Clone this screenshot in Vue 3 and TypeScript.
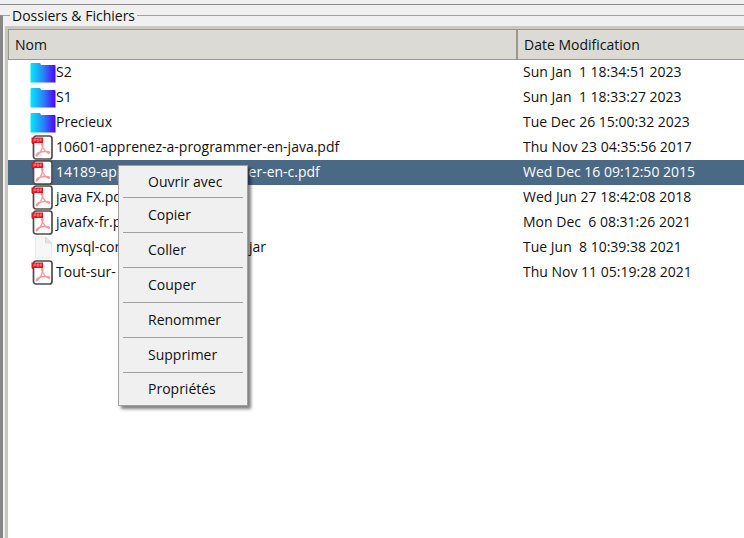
<script setup lang="ts">
import { ref } from 'vue'

type Kind = 'folder' | 'pdf' | 'file'
interface Entry {
  name: string
  kind: Kind
  date: string
}

const entries: Entry[] = [
  { name: 'S2', kind: 'folder', date: 'Sun Jan  1 18:34:51 2023' },
  { name: 'S1', kind: 'folder', date: 'Sun Jan  1 18:33:27 2023' },
  { name: 'Precieux', kind: 'folder', date: 'Tue Dec 26 15:00:32 2023' },
  { name: '10601-apprenez-a-programmer-en-java.pdf', kind: 'pdf', date: 'Thu Nov 23 04:35:56 2017' },
  { name: '14189-apprenez-a-programmer-en-c.pdf', kind: 'pdf', date: 'Wed Dec 16 09:12:50 2015' },
  { name: 'java FX.pdf', kind: 'pdf', date: 'Wed Jun 27 18:42:08 2018' },
  { name: 'javafx-fr.pdf', kind: 'pdf', date: 'Mon Dec  6 08:31:26 2021' },
  { name: 'mysql-connector-java-8.0-bin.jar', kind: 'file', date: 'Tue Jun  8 10:39:38 2021' },
  { name: 'Tout-sur- java.pdf', kind: 'pdf', date: 'Thu Nov 11 05:19:28 2021' },
]

const actions: string[] = ['Ouvrir avec', 'Copier', 'Coller', 'Couper', 'Renommer', 'Supprimer', 'Propriétés']

const selected = ref(4)
const menuOpen = ref(true)

function select(index: number): void {
  selected.value = index
  menuOpen.value = false
}

function openMenu(index: number): void {
  selected.value = index
  menuOpen.value = true
}
</script>

<template>
  <main class="window">
    <fieldset class="group">
      <legend>Dossiers &amp; Fichiers</legend>
      <div class="list">
        <table>
          <colgroup>
            <col class="name-col" />
            <col />
          </colgroup>
          <thead>
            <tr>
              <th scope="col">Nom</th>
              <th scope="col">Date Modification</th>
            </tr>
          </thead>
          <tbody>
            <tr
              v-for="(entry, i) in entries"
              :key="entry.name"
              :class="{ selected: i === selected }"
              @click="select(i)"
              @contextmenu.prevent="openMenu(i)"
            >
              <td>
                <div class="name">
                  <svg v-if="entry.kind === 'folder'" class="icon" viewBox="0 0 26 25" aria-hidden="true">
                    <defs>
                      <linearGradient :id="'folder' + i" x1="0" x2="1" y1="0" y2="0">
                        <stop offset="0" stop-color="#00eaff" />
                        <stop offset="0.5" stop-color="#2a86f8" />
                        <stop offset="1" stop-color="#5000ff" />
                      </linearGradient>
                    </defs>
                    <path d="M0.500 22.500V4Q0.500 3 1.500 3H9.500Q10.500 3 11 5H24.500Q25.500 5 25.500 6V22.500Z" :fill="'url(#folder' + i + ')'" />
                  </svg>
                  <svg v-else-if="entry.kind === 'pdf'" class="icon" viewBox="0 0 26 25" aria-hidden="true">
                    <rect x="3.500" y="1" width="18.500" height="23" rx="2.500" fill="#fff" stroke="#4c4c4c" stroke-width="1.700" />
                    <path d="M12 8.500C13.500 8.500 13 13 9.500 18C7.500 21 6 21.500 6.200 20.300C6.500 18.800 10 17 14 16.500C18 16 20 17 19.500 18C18.500 19 15.500 16.500 13.500 13.500C11.500 10.500 11 8.500 12 8.500Z" fill="none" stroke="#f7979b" stroke-width="1.300" />
                    <path d="M1.500 2.500H13V8H1.500Z" fill="#e3161f" />
                    <path d="M1.500 8H3.500V9.500Z" fill="#8d1015" />
                    <path d="M4 6.500V4H6V5.300H4M7.300 4V6.300H8.800V4ZM10.300 6.500V4H12M10.300 5.200H11.800" fill="none" stroke="#f59a9e" stroke-width="0.700" />
                  </svg>
                  <svg v-else class="icon" viewBox="0 0 26 25" aria-hidden="true">
                    <path d="M5.500 2H15.500L21.500 8V23H5.500Z" fill="#f7f7f7" stroke="#e8e8e8" />
                    <path d="M15.500 2V8H21.500Z" fill="#e4e4e4" stroke="#dadada" />
                  </svg>
                  <span class="label">{{ entry.name }}</span>
                </div>
              </td>
              <td><span class="label">{{ entry.date }}</span></td>
            </tr>
          </tbody>
        </table>
        <ul v-if="menuOpen" class="menu" role="menu">
          <li v-for="action in actions" :key="action" role="none">
            <button type="button" role="menuitem" @click="menuOpen = false">{{ action }}</button>
          </li>
        </ul>
      </div>
    </fieldset>
  </main>
</template>

<style>
body {
  background: #f0f0f0;
}
</style>

<style scoped>
.window {
  box-sizing: border-box;
  display: flex;
  height: 100vh;
  padding-top: 4px;
  background: linear-gradient(#f0f0f0 4px, #8a8a8a 4px, #8a8a8a 5px, #f0f0f0 5px);
  color: #111;
  font: 14px/20px "Open Sans", "Noto Sans", sans-serif;
}

.group {
  flex: 1;
  min-width: 0;
  box-sizing: border-box;
  display: flex;
  flex-direction: column;
  margin: 0;
  padding: 0;
  border: 0 solid #a0a0a0;
  border-width: 1px 0 0;
  border-left: 3px solid #868686;
}

legend {
  margin-left: 7px;
  padding: 2px 2px 0;
}

.list {
  position: relative;
  flex: 1;
  margin-left: 2px;
  border-top: 3px solid #cbc8c2;
  border-left: 3px solid #c8c4be;
  background: #fff;
}

table {
  width: 100%;
  table-layout: fixed;
  border-collapse: separate;
  border-spacing: 0;
}

.name-col {
  width: 510px;
}

th {
  box-sizing: border-box;
  height: 31px;
  padding: 0 6px;
  border-top: 1px solid #9b978f;
  border-bottom: 1px solid #9b978f;
  background: #dbdad5;
  font-weight: 400;
  text-align: left;
}

th:first-child {
  border-left: 1px solid #9b978f;
  border-right: 2px solid #9b978f;
}

td {
  height: 25px;
  padding: 0 5px;
  white-space: pre;
}

.name {
  display: flex;
  align-items: center;
  height: 25px;
  padding-left: 17px;
}

.icon {
  width: 26px;
  height: 25px;
}

.label {
  display: block;
  padding-bottom: 2px;
}

.selected td {
  background: #4a6984;
  color: #fff;
}

.menu {
  position: absolute;
  top: 136px;
  left: 110px;
  box-sizing: border-box;
  width: 130px;
  margin: 0;
  padding: 0 4px;
  border: 1px solid #a0a0a0;
  background: #f0f0f0;
  box-shadow: 3px 3px 3px #00000080;
  list-style: none;
}

.menu li + li {
  border-top: 1px solid #a0a0a0;
}

.menu button {
  display: block;
  width: 100%;
  height: 34px;
  padding: 0 0 0 25px;
  border: 0;
  background: none;
  color: inherit;
  font: inherit;
  text-align: left;
}

.menu li:first-child button {
  height: 31px;
}

.menu li:last-child button {
  height: 32px;
}
</style>
